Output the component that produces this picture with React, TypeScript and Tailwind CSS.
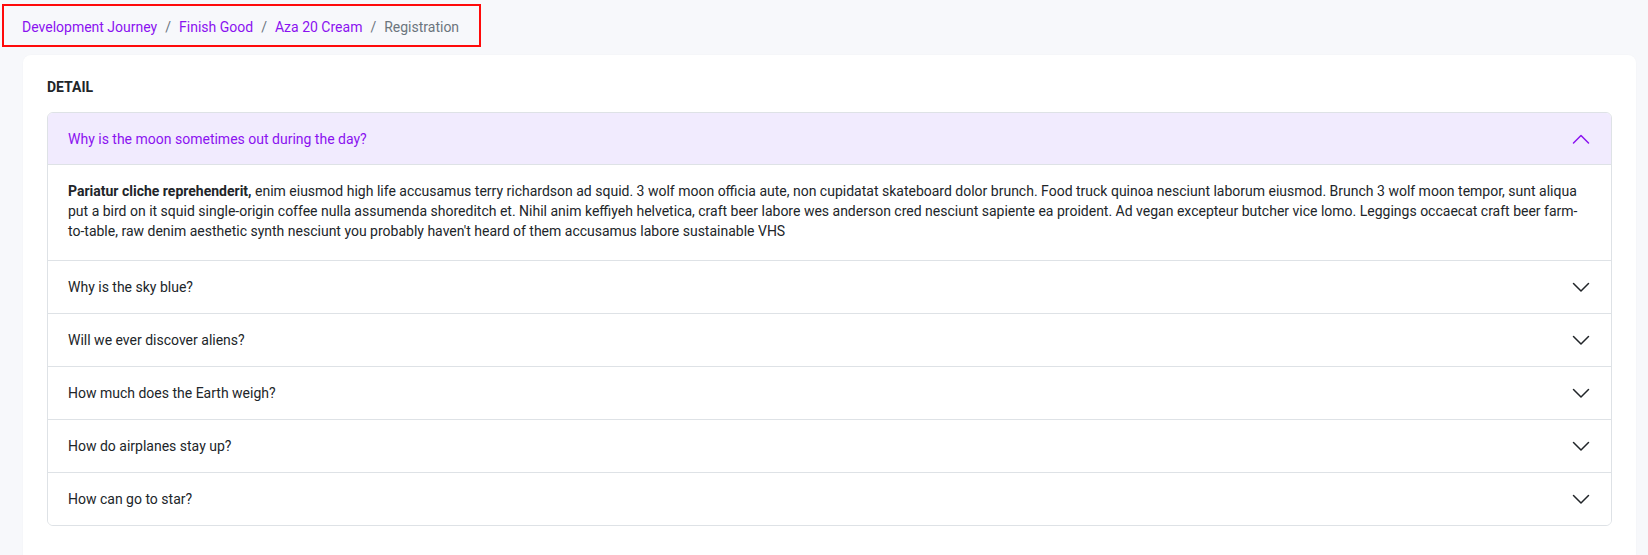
import { useState } from "react";

const items = [
  { q: "Why is the moon sometimes out during the day?" },
  { q: "Why is the sky blue?" },
  { q: "Will we ever discover aliens?" },
  { q: "How much does the Earth weigh?" },
  { q: "How do airplanes stay up?" },
  { q: "How can go to star?" },
];

function Chevron({ open }: { open: boolean }) {
  return (
    <svg
      viewBox="0 0 20 20"
      className={open ? "w-5 h-5 text-[#8b12f0]" : "w-5 h-5 text-[#212529]"}
      fill="none"
      stroke="currentColor"
      strokeWidth="1.5"
      strokeLinecap="round"
      strokeLinejoin="round"
    >
      {open ? <path d="M2.5 14 L10 6.5 L17.5 14" /> : <path d="M2.5 6.5 L10 14 L17.5 6.5" />}
    </svg>
  );
}

export default function App() {
  const [active, setActive] = useState(0);

  return (
    <div className="min-h-[555px] bg-[#f7f8fb] text-[#212529] text-[14px]" style={{ fontFamily: "Roboto, 'Liberation Sans', sans-serif" }}>
      {/* breadcrumb, outlined */}
      <div className="pl-[2px] pt-[4px]">
        <nav className="w-[479px] h-[43px] border-2 border-[#ff0a0a] flex items-center pl-[18px] pt-[2px] leading-[20px]">
          <a className="text-[#8b12f0]">Development Journey</a>
          <span className="px-2 text-[#6c757d]">/</span>
          <a className="text-[#8b12f0]">Finish Good</a>
          <span className="px-2 text-[#6c757d]">/</span>
          <a className="text-[#8b12f0]">Aza 20 Cream</a>
          <span className="px-2 text-[#6c757d]">/</span>
          <span className="text-[#6c757d]">Registration</span>
        </nav>
      </div>

      <div className="pl-[23px] pr-[12px] pt-[8px]">
        <div className="bg-white rounded-lg px-6 pt-[22px] pb-10 shadow-[0_0_2px_rgba(0,0,0,0.03)]">
          <h5 className="font-bold uppercase leading-[20px] mb-[15px] text-[#212529]">Detail</h5>

          <div className="border border-[#dee2e6] rounded-md overflow-hidden">
            {items.map((item, i) => {
              const open = active === i;
              return (
                <div key={i} className={i > 0 ? "border-t border-[#dee2e6]" : ""}>
                  <button
                    onClick={() => setActive(open ? -1 : i)}
                    className={
                      open
                        ? "w-full h-[52px] flex items-center justify-between pl-5 pr-5 bg-[#f1ebfe] text-[#8b12f0] text-left border-b border-[#dee2e6]"
                        : "w-full h-[52px] flex items-center justify-between pl-5 pr-5 bg-white text-[#212529] text-left"
                    }
                  >
                    <span className="leading-[20px]">{item.q}</span>
                    <Chevron open={open} />
                  </button>
                  {open && (
                    <div className="px-5 pt-[16px] pb-[19px] leading-[20px]">
                      <strong>Pariatur cliche reprehenderit,</strong> enim eiusmod high life accusamus terry richardson ad squid. 3 wolf moon officia aute, non cupidatat skateboard dolor brunch. Food truck quinoa nesciunt laborum eiusmod. Brunch 3 wolf moon tempor, sunt aliqua put a bird on it squid single-origin coffee nulla assumenda shoreditch et. Nihil anim keffiyeh helvetica, craft beer labore wes anderson cred nesciunt sapiente ea proident. Ad vegan excepteur butcher vice lomo. Leggings occaecat craft beer farm-to-table, raw denim aesthetic synth nesciunt you probably haven't heard of them accusamus labore sustainable VHS
                    </div>
                  )}
                </div>
              );
            })}
          </div>
        </div>
      </div>
    </div>
  );
}
